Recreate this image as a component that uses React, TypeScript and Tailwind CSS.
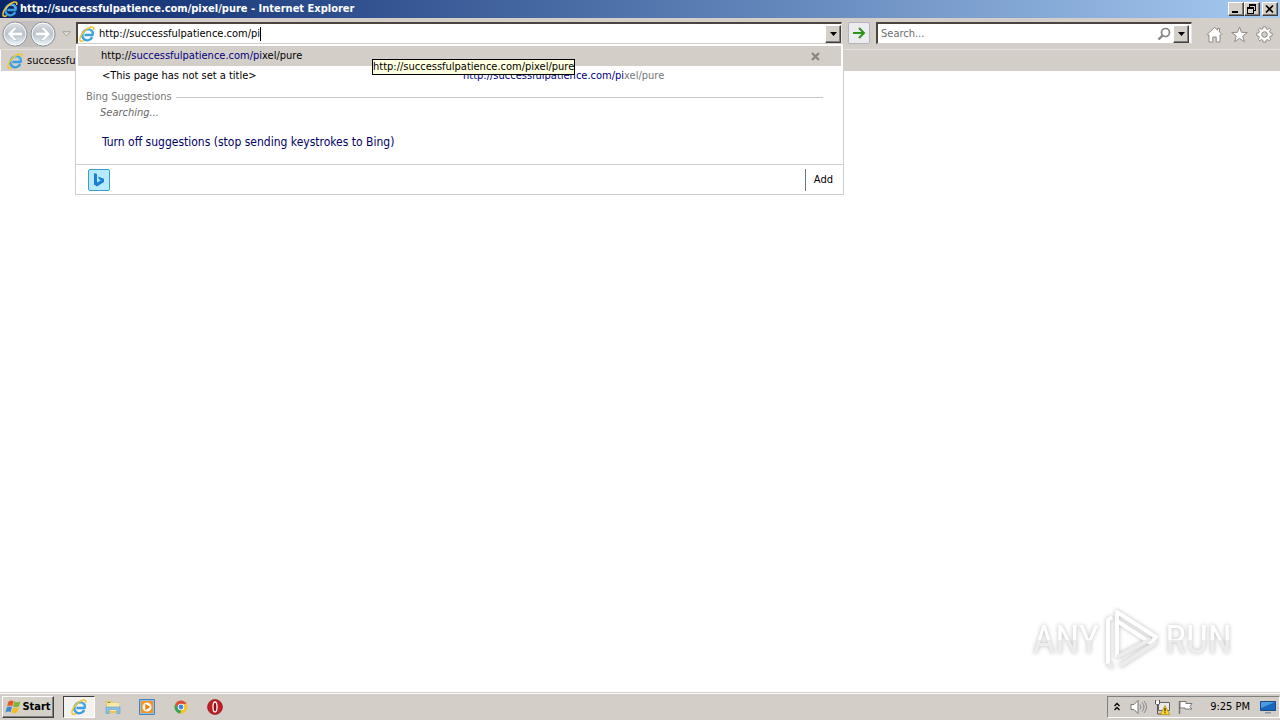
import React, { useState } from "react";

function IELogo({ className }: { className?: string }) {
  return (
    <svg viewBox="0 0 16 16" className={className} aria-hidden="true">
      <path
        d="M13.300 11.200C11.600 14 8.300 14.900 5.700 13.600 3.200 12.300 2.600 9 4.200 6.300 5.900 3.500 9.300 2.600 11.700 4c1.900 1.100 2.400 3.100 1.900 5L5.400 9"
        fill="none"
        stroke="#3a9fe0"
        strokeWidth="2.400"
        strokeLinejoin="round"
      />
      <path
        d="M4.300 8.600C4.500 5.600 7.800 3.400 10.600 4.300c1.500.5 2.300 1.700 2.300 3.100"
        fill="none"
        stroke="#7fd0f7"
        strokeWidth="1"
      />
      <path
        d="M4.300 14.800C2.700 15.600 1 15.400.9 13.600.8 9.500 6.800 2.400 12 1.100c2.200-.5 3.200.4 2.700 2.200"
        fill="none"
        stroke="#f2c52e"
        strokeWidth="1.500"
        strokeLinecap="round"
      />
    </svg>
  );
}

function NavCircle({ label, back }: { label: string; back?: boolean }) {
  return (
    <button aria-label={label} className="h-[26px] w-[26px] shrink-0">
      <svg viewBox="0 0 26 26" className="h-[26px] w-[26px]">
        <defs>
          <linearGradient id={back ? "gb" : "gf"} x1="0" y1="0" x2="0" y2="1">
            <stop offset="0" stopColor="#dfe3e8" />
            <stop offset=".5" stopColor="#b9c1ca" />
            <stop offset="1" stopColor="#eefafd" />
          </linearGradient>
        </defs>
        <circle cx="13" cy="13" r="12" fill={back ? "url(#gb)" : "url(#gf)"} stroke="#8f979e" />
        <circle cx="13" cy="13" r="10.900" fill="none" stroke="#fff" strokeOpacity=".85" />
        <g transform={back ? undefined : "rotate(180 13 13)"}>
          <path
            d="M5.500 13 12 6.500h3.600L11 11.300h9.500v3.400H11l4.600 4.800H12z"
            fill="#fff"
            stroke="#a9b3bd"
            strokeWidth=".5"
          />
        </g>
      </svg>
    </button>
  );
}

function Caret() {
  return (
    <svg viewBox="0 0 7 4" className="h-1 w-[7px]" aria-hidden="true">
      <path d="M0 0h7L3.500 4z" fill="#000" />
    </svg>
  );
}

const raised =
  "flex shrink-0 items-center justify-center border border-t-white border-l-white border-r-[#404040] border-b-[#404040] bg-[#d4d0c8] shadow-[inset_-1px_-1px_0_#808080]";
const sunken =
  "border-t-2 border-l-2 border-r border-b border-t-[#4b443f] border-l-[#4b443f] border-r-[#e9e6e1] border-b-[#d4cec8] bg-white";

function TitleBar() {
  return (
    <header className="flex h-[18px] items-center bg-linear-to-r from-[#0a246a] to-[#a6caf0] pr-0.5 pl-0.5 text-white">
      <IELogo className="h-4 w-4 shrink-0" />
      <h1 className="min-w-0 flex-1 truncate pl-0.5 text-[11px] leading-4 font-bold">
        http://successfulpatience.com/pixel/pure - Internet Explorer
      </h1>
      <button aria-label="Minimize" className={`${raised} h-3.5 w-4`}>
        <svg viewBox="0 0 12 10" className="h-2.5 w-3">
          <path d="M2 7h6v2H2z" />
        </svg>
      </button>
      <button aria-label="Restore" className={`${raised} h-3.5 w-4`}>
        <svg viewBox="0 0 12 10" className="h-2.5 w-3">
          <path
            d="M3 0h7v7H8V6h1V2H4v1H3zM1 3h7v7H1zM2 5v4h5V5z"
            fillRule="evenodd"
          />
        </svg>
      </button>
      <button aria-label="Close" className={`${raised} ml-0.5 h-3.5 w-4`}>
        <svg viewBox="0 0 12 10" className="h-2.5 w-3">
          <path d="m2 1.500 7 7m0-7-7 7" stroke="#000" strokeWidth="1.700" />
        </svg>
      </button>
    </header>
  );
}

function Suggestions() {
  return (
    <div className="absolute top-[22px] -left-px z-10 w-[calc(100%+3px)] border border-t-0 border-[#cfcfcf] bg-white">
      <div className="relative mx-0.5 mt-0.5 flex h-5 items-center bg-[#d4cec8] pr-5 pl-[23px]">
        <a href="#history" className="flex-1 text-black">
          http://<span className="text-[#000080]">successfulpatience.com/pi</span>xel/pure
        </a>
        <button aria-label="Remove" className="flex h-3 w-3 items-center justify-center">
          <svg viewBox="0 0 9 9" className="h-[9px] w-[9px]">
            <path d="m1 1 7 7m0-7-7 7" stroke="#8b8580" strokeWidth="2.200" />
          </svg>
        </button>
        <div
          role="tooltip"
          className="absolute top-[13px] left-[294px] z-20 border border-black bg-[#ffffe1] leading-3.5 text-black"
        >
          http://successfulpatience.com/pixel/pure
        </div>
      </div>
      <a href="#page" className="flex h-5 items-center pl-[26px] text-black">
        <span className="w-[361px] shrink-0">&lt;This page has not set a title&gt;</span>
        <span className="text-[#777]">
          <span className="text-[#000080]">http://successfulpatience.com/pi</span>xel/pure
        </span>
      </a>
      <div className="mt-0.5 flex h-[18px] items-center gap-1 pr-5 pl-2.5 text-[#777]">
        <span>Bing Suggestions</span>
        <hr className="flex-1 border-[#c6c6c6]" />
      </div>
      <p className="h-3.5 pl-6 leading-3.5 text-[#666] italic">Searching...</p>
      <p className="mt-3 flex h-5 items-center pl-[26px] text-[12px]">
        <a href="#off" className="text-[#000066]">
          Turn off suggestions (stop sending keystrokes to Bing)
        </a>
      </p>
      <div className="mt-3 flex h-[30px] items-center justify-between border-t border-[#cfcfcf] pr-2.5 pl-3">
        <button
          aria-label="Bing"
          className="flex h-[22px] w-[22px] items-center justify-center rounded-xs border border-[#3c9bce] bg-[#b5ebfc]"
        >
          <svg viewBox="0 0 12 16" className="h-4 w-3">
            <path d="M1 1l3 1v8.500l4-2.200-2-1L5 4.500l6 2.200v3.200L4 14.500l-3-2z" fill="#1b80d2" />
          </svg>
        </button>
        <button className="h-[22px] border-l border-[#777] pl-2 text-black">Add</button>
      </div>
    </div>
  );
}

function Toolbar() {
  const [url, setUrl] = useState("http://successfulpatience.com/pi");
  return (
    <div className="flex h-[31px] items-start pt-1">
      <div className="-mt-px flex w-[76px] shrink-0 items-center pl-0.5">
        <div className="flex gap-0.5 rounded-full bg-[#c2bfbd]">
          <NavCircle label="Back" back />
          <NavCircle label="Forward" />
        </div>
        <button aria-label="Recent pages" className="ml-1 flex h-4 w-3 items-center justify-center">
          <svg viewBox="0 0 9 6" className="h-1.5 w-[9px]">
            <path d="M.7.7h7.600L4.500 5z" fill="#e4e0dc" stroke="#a7a09a" />
          </svg>
        </button>
      </div>
      <div className="relative min-w-0 flex-[766]">
        <div className={`flex h-[22px] items-center ${sunken}`}>
          <IELogo className="ml-px h-4 w-4 shrink-0" />
          <div className="flex min-w-0 flex-1 items-center pl-1">
            <input
              aria-label="Address"
              value={url}
              onChange={(e) => setUrl(e.target.value)}
              className="max-w-full bg-transparent text-black caret-transparent outline-none [field-sizing:content]"
            />
            <span className="h-3.5 w-px bg-black" />
          </div>
          <button aria-label="Show address history" className={`${raised} h-[18px] w-4`}>
            <Caret />
          </button>
        </div>
        <Suggestions />
      </div>
      <button
        aria-label="Go"
        className="mx-1.5 flex h-[22px] w-[22px] shrink-0 items-center justify-center rounded-xs border border-[#b4b4b8] bg-[#ececf0]"
      >
        <svg viewBox="0 0 14 12" className="h-3 w-3.5">
          <path d="M1 6h11M7 1l5 5-5 5" fill="none" stroke="#2e9418" strokeWidth="2" />
        </svg>
      </button>
      <div className={`flex h-[22px] min-w-0 flex-[311] items-center pr-0.5 ${sunken}`}>
        <input
          aria-label="Search"
          placeholder="Search..."
          className="min-w-0 flex-1 bg-transparent pl-[3px] outline-none placeholder:text-[#6d6d6d]"
        />
        <button aria-label="Search the web" className="mr-0.5 h-3.5 w-3.5">
          <svg viewBox="0 0 14 14" className="h-3.5 w-3.5" fill="none" stroke="#858585">
            <circle cx="8.500" cy="5.500" r="4" strokeWidth="1.700" />
            <path d="m5.500 8.500-4 4" strokeWidth="2.400" />
          </svg>
        </button>
        <button aria-label="Search providers" className={`${raised} h-[18px] w-4`}>
          <Caret />
        </button>
      </div>
      <nav className="mt-1 ml-3.5 flex shrink-0 gap-2 pr-[7px]">
        <button aria-label="Home">
          <svg viewBox="0 0 17 17" className="h-[17px] w-[17px]">
            <path
              d="M1 8.500 8.500 1.500 11.500 4V2.500h2V6L16 8.500l-1 1-1-.8V16h-3.800v-5H6.800v5H3V8.700l-1 .8z"
              fill="#fff"
              stroke="#8f8a86"
            />
          </svg>
        </button>
        <button aria-label="Favorites">
          <svg viewBox="0 0 17 17" className="h-[17px] w-[17px]">
            <path
              d="m8.500 1 2 5.300 5.800.2-4.600 3.500 1.700 5.700-4.900-3.300-4.900 3.300L5.300 10 .7 6.500l5.800-.2z"
              fill="#fff"
              stroke="#8f8a86"
            />
          </svg>
        </button>
        <button aria-label="Tools">
          <svg viewBox="0 0 17 17" className="h-[17px] w-[17px]">
            <path
              d="M7.200.8h2.600l.4 2 1.400.6 1.700-1.200 1.500 1.500-1.200 1.700.6 1.400 2 .4v2.600l-2 .4-.6 1.400 1.200 1.700-1.500 1.500-1.700-1.200-1.400.6-.4 2H7.200l-.4-2-1.400-.6-1.700 1.200-1.500-1.500 1.200-1.700-.6-1.400-2-.4V7.200l2-.4.6-1.400-1.200-1.700 1.500-1.500 1.700 1.200 1.400-.6z"
              fill="#fff"
              stroke="#8f8a86"
            />
            <circle cx="8.500" cy="8.500" r="2.800" fill="#d4cec8" stroke="#8f8a86" />
          </svg>
        </button>
      </nav>
    </div>
  );
}

const wordmark =
  "bg-linear-to-b from-white from-50% to-[#ededed] to-50% bg-clip-text text-transparent";

function Watermark() {
  return (
    <div
      aria-label="ANY RUN"
      className="mr-12 mb-5 flex items-center gap-1 self-end font-['Roboto_Condensed',Roboto,sans-serif] text-[39px] leading-[64px] drop-shadow-[0_0_2px_#bbb]"
    >
      <span className={wordmark}>ANY</span>
      <svg viewBox="0 0 58 64" className="h-16 w-[58px]" fill="none" strokeLinejoin="round">
        <path d="M5 56V12l4-3" stroke="#fff" strokeWidth="4" />
        <path d="M14 49V4l39 25-5 6-34-22" stroke="#fff" strokeWidth="4" />
        <path d="M14 49 48 31M5 56l5 3M17 58l37-24" stroke="#ececec" strokeWidth="4" />
      </svg>
      <span className={wordmark}>RUN</span>
    </div>
  );
}

function Taskbar() {
  return (
    <footer className="flex h-7 items-center border-t border-[#d4d0c8] bg-[#d4cec8] pl-0.5 shadow-[inset_0_1px_0_#fff]">
      <button className={`${raised} h-[22px] w-[52px] text-[11px] font-bold text-black`}>
        <svg viewBox="0 0 17 16" className="h-4 w-[17px] shrink-0">
          <path d="M3.500 2.500C5.500 1 7 1.200 8.700 2.200L7.300 7.200C5.700 6.200 4 6.200 2 7.500z" fill="#e8582a" />
          <path d="M9.500 2.600c2 1 3.700.8 6-.4l-1.500 5c-2 1.200-3.800 1.300-5.900.3z" fill="#7db63a" />
          <path d="M1.800 8.400c1.900-1.200 3.500-1.200 5.200-.3l-1.400 5C4 12.200 2.300 12.200.3 13.400z" fill="#3a8ad6" />
          <path d="M7.900 8.500c2 1 3.700.9 5.900-.3l-1.500 5c-2.100 1.200-3.800 1.200-5.800.2z" fill="#f5bd24" />
        </svg>
        Start
      </button>
      <button
        aria-label="Internet Explorer"
        className="ml-[9px] flex h-[22px] w-8 items-center justify-center border border-t-[#404040] border-l-[#404040] border-r-white border-b-white bg-[#f4f2ef]"
      >
        <IELogo className="h-4 w-4" />
      </button>
      <button aria-label="Windows Explorer" className="ml-2.5">
        <svg viewBox="0 0 16 16" className="h-4 w-4">
          <path d="M1 2h5l1 1.500h7V14H1z" fill="#e9c55a" />
          <path d="M2 4h12v8H2z" fill="#f9e9a4" />
          <path d="M3 3h2v1H3z" fill="#45a045" />
          <path
            d="M1 8h14v6.500h-3V12a1.500 1.500 0 0 0-1.500-1.500h-5A1.500 1.500 0 0 0 4 12v2.500H1z"
            fill="#86c3e6"
            stroke="#5a9fc8"
            strokeWidth=".6"
          />
        </svg>
      </button>
      <button aria-label="Media Player" className="ml-[18px]">
        <svg viewBox="0 0 16 16" className="h-4 w-4">
          <path d="M.5.500h15v15H.5z" fill="#8fc3ee" stroke="#4482bb" />
          <path d="M2 2h12v12H2z" fill="#f7921e" />
          <circle cx="8" cy="8" r="4.500" fill="#fff" />
          <path d="m6.300 4.800 5 3.200-5 3.200z" fill="#ee7d0b" />
        </svg>
      </button>
      <button aria-label="Chrome" className="ml-[18px]">
        <svg viewBox="0 0 16 16" className="h-4 w-4">
          <circle cx="8" cy="8" r="6.500" fill="#f9c321" />
          <path d="M2.400 4.800A6.500 6.500 0 0 1 13.600 4.800L8 5z" fill="#dd4a3c" />
          <path d="M2.400 4.800 5.500 10 8 5h5.600" fill="#dd4a3c" />
          <path d="M2.400 4.800 5.500 10.200 8 11 7.300 14.500A6.500 6.500 0 0 1 2.400 4.800" fill="#34a257" />
          <circle cx="8" cy="8" r="3.200" fill="#fff" />
          <circle cx="8" cy="8" r="2.400" fill="#3f83ed" />
        </svg>
      </button>
      <button aria-label="Opera" className="ml-[18px]">
        <svg viewBox="0 0 16 16" className="h-4 w-4">
          <circle cx="8" cy="8" r="7.500" fill="#c21d22" stroke="#8a1014" strokeWidth=".6" />
          <ellipse cx="8" cy="8" rx="2" ry="5" fill="#8a1014" stroke="#fff" strokeWidth="1.300" />
        </svg>
      </button>
      <div className="ml-auto flex h-[22px] items-center border border-t-[#808080] border-l-[#808080] border-r-white border-b-white pr-[3px] pl-1.5 text-black">
        <button aria-label="Show hidden icons">
          <svg viewBox="0 0 6 9" className="h-[9px] w-1.5" fill="none" stroke="#000" strokeWidth="1.300">
            <path d="m.5 4 2.500-2.500L5.500 4M.5 8 3 5.500 5.500 8" />
          </svg>
        </button>
        <svg viewBox="0 0 17 16" className="ml-2.5 h-4 w-[17px]" aria-hidden="true">
          <path d="M1 5.500h3l4-4v13l-4-4H1z" fill="#fff" stroke="#777" />
          <path d="M10 5.500q2 2.500 0 5M12 3.500q4 4.500 0 9M14 2q5 6 0 12" fill="none" stroke="#888" />
        </svg>
        <svg viewBox="0 0 16 16" className="ml-[7px] h-4 w-4" aria-hidden="true">
          <path d="M4.500 3.500h11v8h-11z" fill="#e9e9e9" stroke="#666" />
          <path d="M1.500 1v4h4V1M3.500 5v10H8" fill="none" stroke="#555" />
          <path d="M2 2h3v3H2z" fill="#fff" />
          <path d="m11 6.500 4.700 9H6.300z" fill="#ffd829" stroke="#a07b00" strokeWidth=".6" />
          <path d="M10.500 9h1v3.500h-1zM10.500 13.300h1v1h-1z" />
        </svg>
        <svg viewBox="0 0 16 16" className="ml-[7px] h-4 w-4" aria-hidden="true">
          <path d="M2.500 2v13" stroke="#777" strokeWidth="1.500" />
          <path d="M3 2.500h6v2h6l-2 3 2 2.500H8V9H3z" fill="#fff" stroke="#777" />
        </svg>
        <time className="ml-[17px]">9:25 PM</time>
        <button aria-label="Show desktop" className="ml-2.5">
          <svg viewBox="0 0 16 16" className="h-4 w-4">
            <path d="M.5 2.500h15v9H.5z" fill="#1b66bd" stroke="#174b86" />
            <path d="M1 3h14L1 9z" fill="#4d9be2" />
            <path d="M5 13h6v1.500H5z" fill="#8797a8" />
          </svg>
        </button>
      </div>
    </footer>
  );
}

export default function App() {
  return (
    <div className="flex min-h-screen flex-col bg-white font-['DejaVu_Sans_Condensed','DejaVu_Sans',sans-serif] text-[11px] leading-4">
      <TitleBar />
      <div className="bg-[#d4cec8]">
        <Toolbar />
        <div className="flex h-[22px] items-center border-t border-[#e6e2de]">
          <div className="flex h-full w-[75px] items-center overflow-hidden border-l border-white pl-1.5 whitespace-nowrap text-black">
            <IELogo className="mr-1 h-4 w-4 shrink-0" />
            successfu
          </div>
        </div>
      </div>
      <main className="flex flex-1 flex-col justify-end">
        <Watermark />
      </main>
      <Taskbar />
    </div>
  );
}
